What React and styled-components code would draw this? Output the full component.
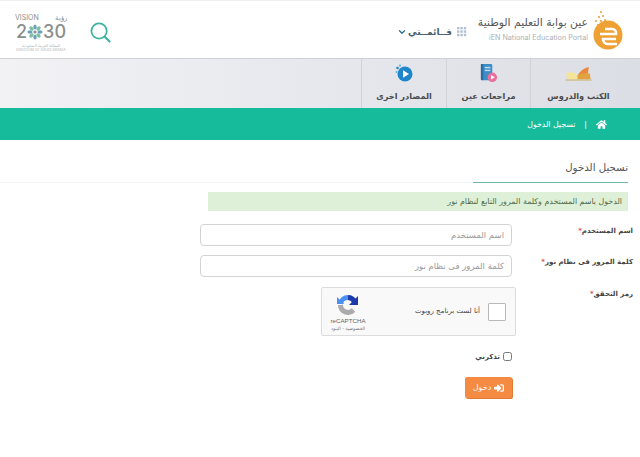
// Packages
import React from "react"
import styled, { createGlobalStyle } from "styled-components"
import { FaHome, FaSignInAlt } from "react-icons/fa"
import { LuChevronDown } from "react-icons/lu"

// Styles
const GlobalStyle = createGlobalStyle`
    html, body {
        margin: 0;
        padding: 0;
        background: #fff;
    }
    body {
        direction: rtl;
        font-family: "DejaVu Sans", "Liberation Sans", sans-serif;
        color: #444;
    }
    * {
        box-sizing: border-box;
    }
`

const Page = styled.div`
    width: 640px;
    height: 457px;
    overflow: hidden;
`

const Header = styled.header`
    height: 58px;
    display: flex;
    align-items: center;
    justify-content: space-between;
    padding: 0 17px 0 15px;
    border-top: 1px solid #f0f0f0;
`

const HeaderSide = styled.div`
    display: flex;
    align-items: center;
`

const Brand = styled.div`
    display: flex;
    align-items: center;
    gap: 5px;
    margin-left: 11px;
`

const BrandText = styled.div`
    display: flex;
    flex-direction: column;
    align-items: flex-start;
    gap: 3px;
    margin-top: -1px;
`

const BrandTitle = styled.div`
    font-size: 10.8px;
    line-height: 14px;
    color: #555;
    white-space: nowrap;
`

const BrandSub = styled.div`
    direction: ltr;
    font-family: "Inter", sans-serif;
    font-size: 7.2px;
    line-height: 9px;
    color: #aab2b8;
    white-space: nowrap;
`

const MyMenu = styled.div`
    display: flex;
    align-items: center;
    gap: 5px;
    margin-top: 5px;
    color: #46606e;
    font-size: 9px;
    font-weight: bold;
`

const ChevronIcon = styled(LuChevronDown)`
    margin-right: -4px;
    color: #2f6f8f;
`

const SearchWrap = styled.div`
    display: flex;
    margin-top: 6px;
`

const Vision = styled.div`
    direction: ltr;
    width: 52px;
    margin-right: 23px;
    margin-top: 7px;
    display: flex;
    flex-direction: column;
    align-items: center;
    color: #8b8f8e;
    font-family: "Inter", sans-serif;
`

const VisionTop = styled.div`
    width: 100%;
    height: 9px;
    display: flex;
    justify-content: space-between;
    font-size: 7px;
    line-height: 9px;
    overflow: hidden;
`

const VisionYear = styled.div`
    margin-top: 2px;
    height: 16px;
    display: flex;
    align-items: center;
    font-size: 18px;
    line-height: 16px;
    font-weight: 500;
`

const VisionNotes = styled.div`
    margin-top: 3px;
    display: flex;
    flex-direction: column;
    align-items: center;
`

const VisionNote = styled.div`
    font-size: ${props => props.size}px;
    line-height: 5px;
    color: #b4b7b6;
    white-space: nowrap;
`

const Nav = styled.nav`
    height: 50px;
    display: flex;
    padding-right: 14px;
    background: linear-gradient(90deg, #f2f2f5, #dcdee5);
    border-top: 1px solid #cfd1d6;
`

const NavItem = styled.div`
    width: ${props => props.width}px;
    display: flex;
    flex-direction: column;
    align-items: center;
    padding-top: 2px;
    border-left: 1px solid #d2d3d8;
`

const NavIcon = styled.div`
    height: 24px;
    display: flex;
    align-items: center;
    justify-content: center;
`

const NavLabel = styled.div`
    margin-top: 4px;
    font-size: 8.2px;
    line-height: 14px;
    font-weight: bold;
    color: #4b4b4b;
    white-space: nowrap;
`

const Breadcrumb = styled.div`
    height: 32px;
    padding-right: 33px;
    display: flex;
    align-items: center;
    gap: 9px;
    background: #16bb9c;
    color: #fff;
    font-size: 7.8px;
`

const Content = styled.main`
    padding: 19px 12px 0 0;
`

const TitleBar = styled.div`
    border-bottom: 1px solid #f2f3f3;
`

const Title = styled.h2`
    width: 155px;
    margin: 0 0 -1px 0;
    padding: 0 0 6px 0;
    font-size: 10.2px;
    line-height: 17px;
    font-weight: normal;
    color: #555;
    border-bottom: 1px solid #6fb6ac;
`

const Notice = styled.div`
    width: 420px;
    height: 19px;
    margin-top: 9px;
    padding-right: 6px;
    display: flex;
    align-items: center;
    background: #dff0d8;
    color: #4f6b48;
    font-size: 7.9px;
`

const FormRow = styled.div`
    display: flex;
    margin-top: ${props => props.top}px;
`

const Label = styled.label`
    width: 121px;
    margin-right: -5px;
    flex-shrink: 0;
    font-size: 7px;
    line-height: 14px;
    font-weight: bold;
    color: #444;
    white-space: nowrap;

    b {
        color: #d9534f;
    }
`

const Input = styled.input`
    width: 312px;
    height: 22px;
    padding: 0 7px;
    border: 1px solid #d3d3d3;
    border-radius: 4px;
    background: #fff;
    font-family: inherit;
    font-size: 8.5px;
    direction: rtl;

    &::placeholder {
        color: #9a9a9a;
    }
`

const Captcha = styled.div`
    width: 195px;
    height: 49px;
    margin-right: -4px;
    display: flex;
    align-items: center;
    padding: 0 9px 0 5px;
    background: #f9f9f9;
    border: 1px solid #dcdcdc;
    border-radius: 2px;
`

const CaptchaBox = styled.div`
    width: 18px;
    height: 18px;
    background: #fff;
    border: 1px solid #b8b8b8;
    border-radius: 1px;
`

const CaptchaText = styled.div`
    margin-right: 8px;
    margin-top: -2px;
    flex: 1;
    font-size: 7px;
    color: #444;
`

const CaptchaLogo = styled.div`
    display: flex;
    flex-direction: column;
    align-items: center;
    width: 42px;
    margin-top: 3px;
`

const CaptchaName = styled.div`
    direction: ltr;
    margin-top: 1px;
    font-family: "Liberation Sans", sans-serif;
    font-size: 6.2px;
    line-height: 8px;
    color: #666;
`

const CaptchaLinks = styled.div`
    font-size: 4.6px;
    line-height: 7px;
    color: #777;
    white-space: nowrap;
`

const Remember = styled.label`
    margin-top: 16px;
    margin-right: 116px;
    display: flex;
    align-items: center;
    gap: 3px;
    font-size: 7px;
    font-weight: bold;
    color: #444;

    input {
        width: 9px;
        height: 9px;
        margin: 0;
    }
`

const Submit = styled.button`
    width: 47px;
    height: 21px;
    margin-top: 16px;
    margin-right: 116px;
    display: flex;
    align-items: center;
    justify-content: center;
    gap: 3px;
    border: 0;
    border-radius: 2px;
    background: #f58a42;
    box-shadow: 1px 1px 0 #e07a34;
    color: #fff;
    font-family: inherit;
    font-size: 8px;
`

function PortalLogo() {
    return (
        <svg width="30" height="40" viewBox="0 0 30 40">
            <g fill="#e9b765">
                <rect x="7" y="1" width="2" height="2" />
                <rect x="5" y="6" width="2" height="2" />
                <rect x="9" y="5" width="2" height="2" />
                <rect x="2" y="10" width="2" height="2" />
                <rect x="7" y="10" width="2" height="2" />
                <rect x="11" y="9" width="2" height="2" />
                <rect x="4" y="14" width="2" height="2" />
                <rect x="9" y="14" width="2" height="2" />
            </g>
            <circle cx="15" cy="25" r="14.5" fill="#eea032" />
            <path
                d="M7 24h16a4 4 0 0 0-4-5h-7M23 29H10a5 5 0 0 0 5 5h9"
                fill="none"
                stroke="#fff"
                strokeWidth="2.6"
            />
        </svg>
    )
}

function SearchIcon() {
    return (
        <svg width="21" height="21" viewBox="0 0 22 22" fill="none">
            <circle cx="9.5" cy="9.5" r="8" stroke="#3bb59f" strokeWidth="1.8" />
            <path d="M15.5 15.5l5 5" stroke="#3bb59f" strokeWidth="2.2" strokeLinecap="round" />
        </svg>
    )
}

function GridIcon() {
    const cells = []
    for (let r = 0; r < 3; r++) {
        for (let c = 0; c < 3; c++) {
            cells.push(<rect key={`${r}-${c}`} x={c * 3.4} y={r * 3.4} width="2.4" height="2.4" />)
        }
    }
    return (
        <svg width="10" height="10" viewBox="0 0 10 10" fill="#b3bfd2">
            {cells}
        </svg>
    )
}

function VisionFlower() {
    const petals = [0, 45, 90, 135, 180, 225, 270, 315]
    return (
        <svg width="16" height="16" viewBox="0 0 16 16">
            {petals.map((a, i) => (
                <ellipse
                    key={a}
                    cx="8"
                    cy="3"
                    rx="1.7"
                    ry="2.6"
                    fill={i % 2 ? "#7fbfa6" : "#6aa3b8"}
                    transform={`rotate(${a} 8 8)`}
                />
            ))}
            <circle cx="8" cy="8" r="1.6" fill="#8b8f8e" />
        </svg>
    )
}

function BookIcon() {
    return (
        <svg width="27" height="15" viewBox="0 0 28 16">
            <path d="M1 8c4-2 8-2 12 2v5H2z" fill="#f4e39a" />
            <path d="M13 10c3-5 7-8 12-9l-1 7z" fill="#e8893c" />
            <path d="M13 10c3-2 8-3 13-2l1 7H13z" fill="#e2a23f" />
            <rect x="0" y="14" width="28" height="2" fill="#d2c7a0" />
        </svg>
    )
}

function NotebookIcon() {
    return (
        <svg width="19" height="19" viewBox="0 0 20 20">
            <rect x="2" y="0" width="12" height="17" rx="1.5" fill="#3f8dc6" />
            <rect x="2" y="0" width="2.5" height="17" fill="#2b6d9f" />
            <rect x="6" y="3" width="6" height="1.5" fill="#bcdcf2" />
            <rect x="6" y="6" width="6" height="1.5" fill="#bcdcf2" />
            <circle cx="14" cy="14" r="5" fill="#e8709a" />
            <path d="M12.6 11.6l4 2.4-4 2.4z" fill="#fff" />
        </svg>
    )
}

function PlayIcon() {
    return (
        <svg width="18" height="18" viewBox="0 0 18 18">
            <circle cx="10" cy="10" r="7.5" fill="#1f86c9" />
            <path d="M8 6.2l6 3.8-6 3.8z" fill="#fff" />
            <circle cx="2.5" cy="4" r="1.3" fill="#1f86c9" />
            <circle cx="5" cy="1.6" r="1.1" fill="#5cb3e3" />
            <circle cx="1.5" cy="8" r="1" fill="#5cb3e3" />
        </svg>
    )
}

function RecaptchaIcon() {
    return (
        <svg width="22" height="22" viewBox="0 0 22 22" fill="none">
            <path d="M11 3.5a7.5 7.5 0 0 1 6.5 4" stroke="#1c3aa9" strokeWidth="5" />
            <path d="M3.5 10a7.5 7.5 0 0 1 7.5-6.5" stroke="#4a90f5" strokeWidth="5" />
            <path d="M3.5 11a7.5 7.5 0 0 0 13 5" stroke="#ababab" strokeWidth="5" />
            <path d="M21 2v9h-9z" fill="#1c3aa9" />
            <path d="M0 3l7 7H0z" fill="#4a90f5" />
        </svg>
    )
}

function App() {
    return (
        <Page>
            <GlobalStyle />
            <Header>
                <HeaderSide>
                    <Brand>
                        <PortalLogo />
                        <BrandText>
                            <BrandTitle>عين بوابة التعليم الوطنية</BrandTitle>
                            <BrandSub>iEN National Education Portal</BrandSub>
                        </BrandText>
                    </Brand>
                    <MyMenu>
                        <GridIcon />
                        <span>قــائمــتي</span>
                        <ChevronIcon size={10} strokeWidth={3} />
                    </MyMenu>
                </HeaderSide>
                <HeaderSide>
                    <SearchWrap>
                        <SearchIcon />
                    </SearchWrap>
                    <Vision>
                        <VisionTop>
                            <span>VISION</span>
                            <span>رؤية</span>
                        </VisionTop>
                        <VisionYear>
                            2<VisionFlower />
                            30
                        </VisionYear>
                        <VisionNotes>
                            <VisionNote size={4.2}>المملكة العربية السعودية</VisionNote>
                            <VisionNote size={3.6}>KINGDOM OF SAUDI ARABIA</VisionNote>
                        </VisionNotes>
                    </Vision>
                </HeaderSide>
            </Header>

            <Nav>
                <NavItem width={96}>
                    <NavIcon>
                        <BookIcon />
                    </NavIcon>
                    <NavLabel>الكتب والدروس</NavLabel>
                </NavItem>
                <NavItem width={84}>
                    <NavIcon>
                        <NotebookIcon />
                    </NavIcon>
                    <NavLabel>مراجعات عين</NavLabel>
                </NavItem>
                <NavItem width={85}>
                    <NavIcon>
                        <PlayIcon />
                    </NavIcon>
                    <NavLabel>المصادر اخرى</NavLabel>
                </NavItem>
            </Nav>

            <Breadcrumb>
                <FaHome size={11} />
                <span>|</span>
                <span>تسجيل الدخول</span>
            </Breadcrumb>

            <Content>
                <TitleBar>
                    <Title>تسجيل الدخول</Title>
                </TitleBar>
                <Notice>الدخول باسم المستخدم وكلمة المرور التابع لنظام نور</Notice>

                <FormRow top={13}>
                    <Label>
                        اسم المستخدم<b>*</b>
                    </Label>
                    <Input placeholder="اسم المستخدم" />
                </FormRow>
                <FormRow top={9}>
                    <Label>
                        كلمة المرور فى نظام نور<b>*</b>
                    </Label>
                    <Input placeholder="كلمة المرور فى نظام نور" />
                </FormRow>
                <FormRow top={10}>
                    <Label>
                        رمز التحقق<b>*</b>
                    </Label>
                    <Captcha>
                        <CaptchaBox />
                        <CaptchaText>أنا لست برنامج روبوت</CaptchaText>
                        <CaptchaLogo>
                            <RecaptchaIcon />
                            <CaptchaName>reCAPTCHA</CaptchaName>
                            <CaptchaLinks>الخصوصية - البنود</CaptchaLinks>
                        </CaptchaLogo>
                    </Captcha>
                </FormRow>
                <Remember>
                    <input type="checkbox" />
                    تذكرني
                </Remember>
                <Submit>
                    <FaSignInAlt size={10} />
                    دخول
                </Submit>
            </Content>
        </Page>
    )
}

export default App
